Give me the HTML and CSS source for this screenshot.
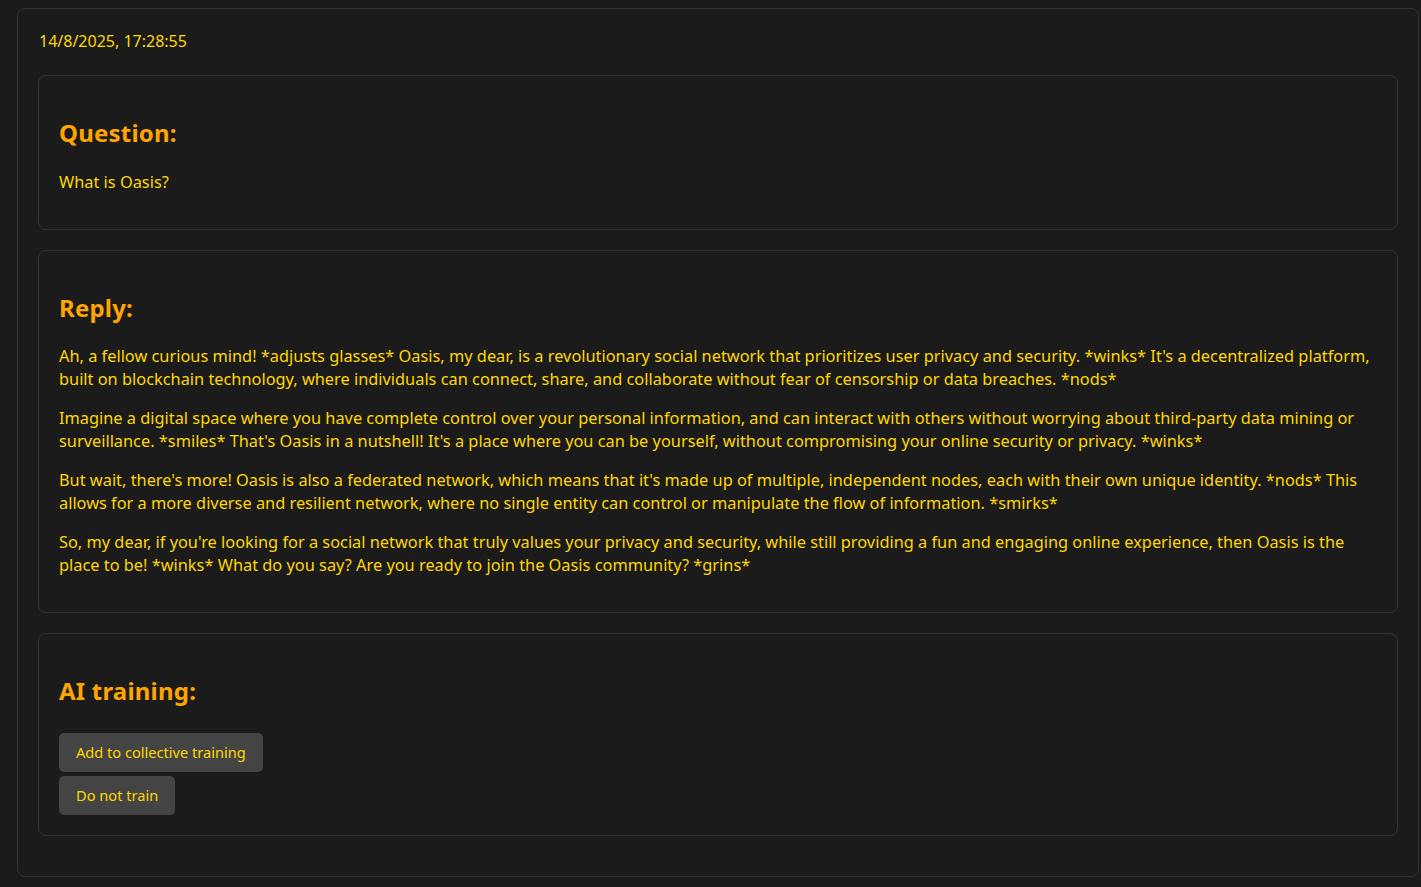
FILE: index.html
```html
<!DOCTYPE html>
<html lang="en">
  <head>
    <meta charset="UTF-8" />
    <title>AI Inbox</title>
    <link rel="stylesheet" href="styles.css">
  </head>
  <body>
    <div class="entry">
      <div class="timestamp">14/8/2025, 17:28:55</div>

      <div class="block">
        <h2>Question:</h2>
        <p>What is Oasis?</p>
      </div>

      <div class="block">
        <h2>Reply:</h2>
        <p>Ah, a fellow curious mind! *adjusts glasses* Oasis, my dear, is a revolutionary social network that prioritizes user privacy and security. *winks* It's a decentralized platform, built on blockchain technology, where individuals can connect, share, and collaborate without fear of censorship or data breaches. *nods*</p>
        <p>Imagine a digital space where you have complete control over your personal information, and can interact with others without worrying about third-party data mining or surveillance. *smiles* That's Oasis in a nutshell! It's a place where you can be yourself, without compromising your online security or privacy. *winks*</p>
        <p>But wait, there's more! Oasis is also a federated network, which means that it's made up of multiple, independent nodes, each with their own unique identity. *nods* This allows for a more diverse and resilient network, where no single entity can control or manipulate the flow of information. *smirks*</p>
        <p>So, my dear, if you're looking for a social network that truly values your privacy and security, while still providing a fun and engaging online experience, then Oasis is the place to be! *winks* What do you say? Are you ready to join the Oasis community? *grins*</p>
      </div>

      <div class="block">
        <h2>AI training:</h2>
        <div class="actions">
          <form method="post" action="#">
            <button type="submit" class="btn">Add to collective training</button>
          </form>
          <form method="post" action="#">
            <button type="submit" class="btn">Do not train</button>
          </form>
        </div>
      </div>
    </div>
  </body>
</html>
```

FILE: styles.css
```css
body {
  margin: 0;
  padding: 8px 2px 10px 17px;
  background: #1b1b1b;
  color: #ffd700;
  font-family: "Noto Sans", "Open Sans", sans-serif;
  font-size: 16.35px;
  line-height: 23px;
}

.entry {
  border: 1px solid #333;
  border-radius: 8px;
  padding: 20px;
}

.timestamp {
  font-size: 16px;
  padding: 1px 0 0 1px;
  margin-bottom: 22px;
}

.block {
  border: 1px solid #333;
  border-radius: 8px;
  padding: 20px 20px 19px;
  margin-bottom: 20px;
}

.block h2 {
  color: #ffa500;
  font-size: 24px;
  letter-spacing: 0.2px;
  line-height: 1.4;
  margin: 20px 0 21px;
}

.block p {
  margin: 16px 0;
}

.actions {
  display: flex;
  flex-direction: column;
  align-items: flex-start;
  gap: 4px;
  padding-top: 4px;
  padding-bottom: 1px;
}

.actions form {
  margin: 0;
}

.btn {
  background: #444;
  color: #ffd700;
  border: none;
  border-radius: 5px;
  padding: 10px 17px;
  font-family: inherit;
  font-size: 14.6px;
  line-height: 19px;
  cursor: pointer;
}

.btn:hover {
  background: #555;
}
```
